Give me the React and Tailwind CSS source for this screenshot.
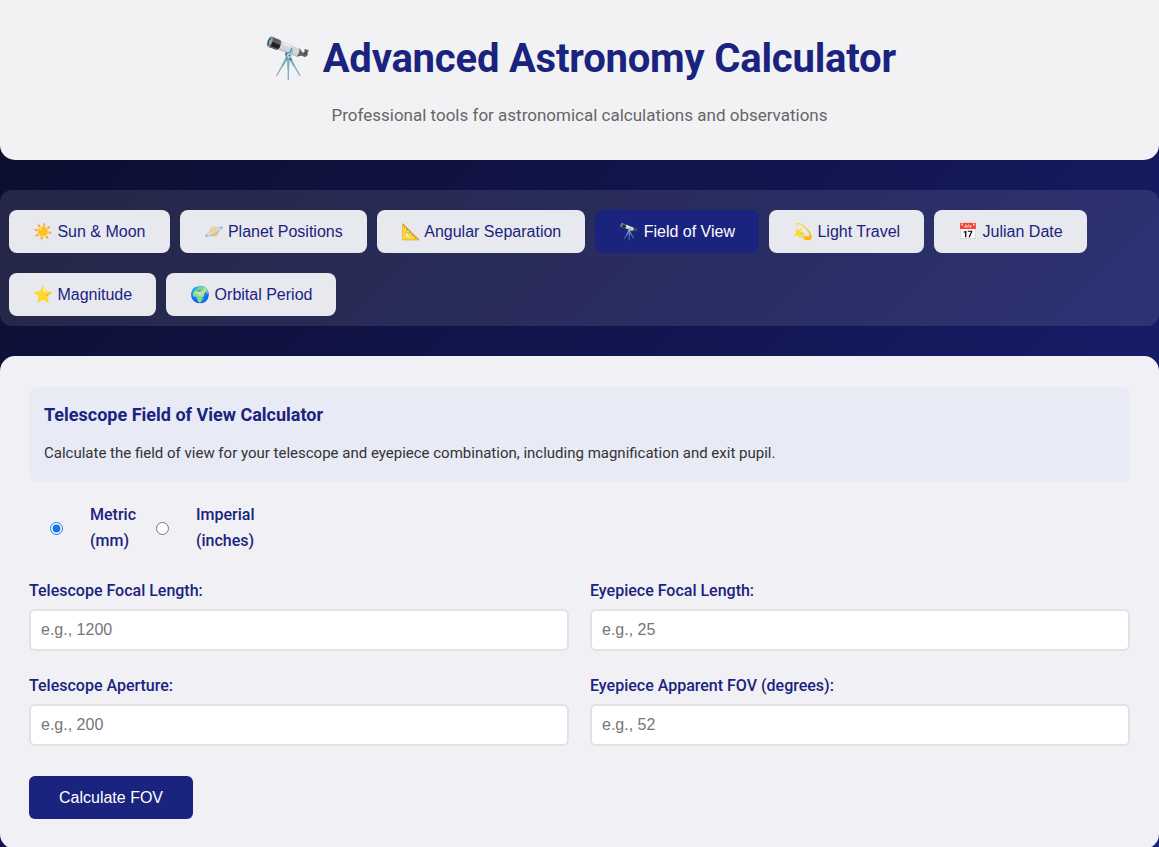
const tabs = [
  { id: 'sun', label: '☀️ Sun & Moon' },
  { id: 'planets', label: '🪐 Planet Positions' },
  { id: 'angular', label: '📐 Angular Separation' },
  { id: 'fov', label: '🔭 Field of View' },
  { id: 'light', label: '💫 Light Travel' },
  { id: 'julian', label: '📅 Julian Date' },
  { id: 'magnitude', label: '⭐ Magnitude' },
  { id: 'orbital', label: '🌍 Orbital Period' },
];

const fields = [
  { id: 'telescopeFocal', label: 'Telescope Focal Length:', placeholder: 'e.g., 1200' },
  { id: 'eyepieceFocal', label: 'Eyepiece Focal Length:', placeholder: 'e.g., 25' },
  { id: 'aperture', label: 'Telescope Aperture:', placeholder: 'e.g., 200' },
  { id: 'afov', label: 'Eyepiece Apparent FOV (degrees):', placeholder: 'e.g., 52' },
];

function TabButton({ label, active }) {
  return (
    <button
      className={
        active
          ? 'h-[43px] px-6 rounded-lg bg-[#1a237e] text-white text-[16px] font-["Liberation_Sans",Arial,sans-serif] whitespace-nowrap'
          : 'h-[43px] px-6 rounded-lg bg-[#e8e9ee] text-[#1a237e] text-[16px] font-["Liberation_Sans",Arial,sans-serif] whitespace-nowrap'
      }
    >
      {label}
    </button>
  );
}

export default function App() {
  return (
    <div className="min-h-screen bg-[linear-gradient(135deg,#0b0d2a_0%,#121650_50%,#1a237e_100%)] font-[Roboto,'Noto_Sans',sans-serif]">
      <header className="h-[160px] bg-[#f2f2f5] rounded-b-[15px] flex flex-col items-center">
        <h1 className="mt-[35px] text-[40px] leading-[48px] font-bold text-[#1a237e] tracking-[-0.2px]">
          🔭 Advanced Astronomy Calculator
        </h1>
        <p className="mt-[20px] text-[17px] text-[#666666]">
          Professional tools for astronomical calculations and observations
        </p>
      </header>

      <nav className="mt-[30px] bg-white/10 rounded-xl pt-[20px] pb-[10px] px-[9px] flex flex-wrap gap-x-[10px] gap-y-[20px]">
        {tabs.map((t) => (
          <TabButton key={t.id} label={t.label} active={t.id === 'fov'} />
        ))}
      </nav>

      <main className="mt-[30px] bg-[#f1f1f5] rounded-t-[15px] rounded-b-[15px] px-[29px] pt-[31px] pb-[30px]">
        <div className="bg-[#e8eaf6] rounded-lg px-[15px] pt-[16px] pb-[18px]">
          <h3 className="text-[18px] leading-[24px] font-bold text-[#1a237e]">
            Telescope Field of View Calculator
          </h3>
          <p className="mt-[15px] text-[15px] leading-[22px] text-[#333333]">
            Calculate the field of view for your telescope and eyepiece combination, including magnification and exit pupil.
          </p>
        </div>

        <div className="mt-[20px] flex items-center gap-[19px]">
          <label className="flex items-center">
            <span className="w-[55px] flex justify-center">
              <input type="radio" name="units" defaultChecked className="w-[13px] h-[13px] accent-[#1a73e8]" />
            </span>
            <span className="ml-[6px] w-min text-[16px] leading-[26px] font-medium text-[#1a237e]">Metric (mm)</span>
          </label>
          <label className="flex items-center">
            <span className="w-[15px] flex justify-center">
              <input type="radio" name="units" className="w-[13px] h-[13px]" />
            </span>
            <span className="ml-[26px] w-min text-[16px] leading-[26px] font-medium text-[#1a237e]">Imperial (inches)</span>
          </label>
        </div>

        <div className="mt-[27px] grid grid-cols-2 gap-x-[21px] gap-y-[25px]">
          {fields.map((f) => (
            <div key={f.id}>
              <label htmlFor={f.id} className="block mb-[8px] text-[16px] leading-[20px] font-medium text-[#1a237e]">
                {f.label}
              </label>
              <input
                id={f.id}
                type="number"
                placeholder={f.placeholder}
                className="w-full h-[42px] px-[10px] bg-white border-2 border-[#e2e2e6] rounded-md text-[16px] font-['Liberation_Sans',Arial,sans-serif] placeholder:text-[#767676] outline-none"
              />
            </div>
          ))}
        </div>

        <button className="mt-[30px] h-[43px] px-[30px] rounded-md bg-[#1a237e] text-white text-[16px] font-['Liberation_Sans',Arial,sans-serif]">
          Calculate FOV
        </button>
      </main>
    </div>
  );
}
